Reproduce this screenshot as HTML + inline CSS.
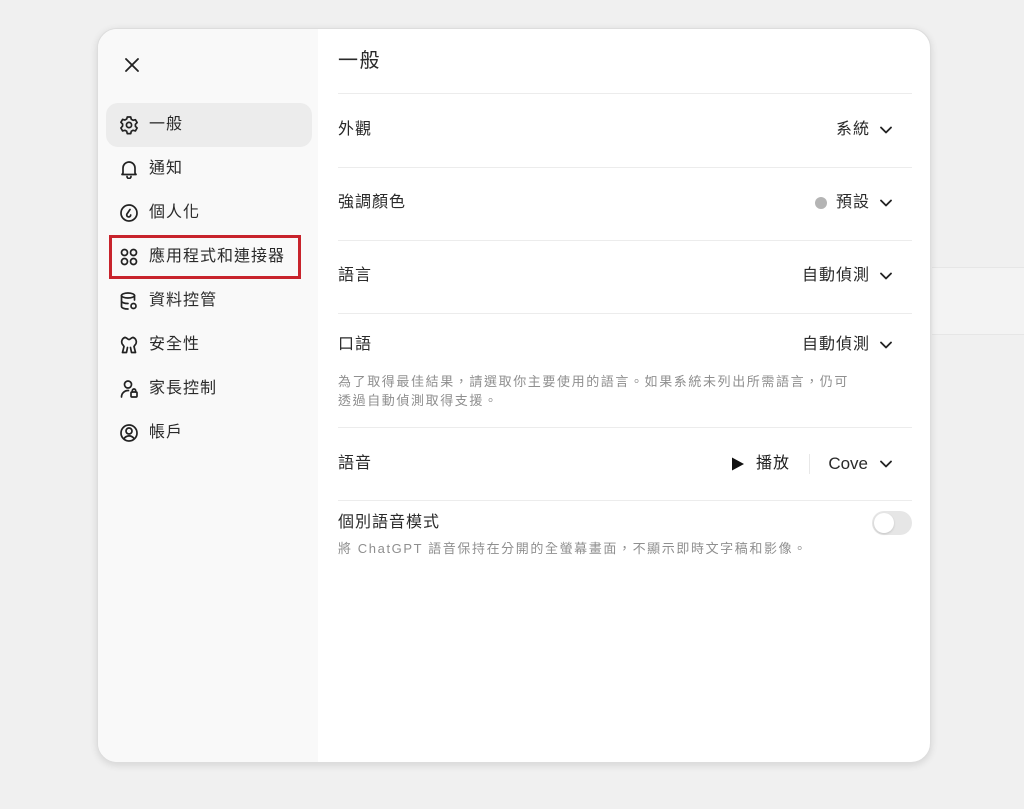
<!DOCTYPE html>
<html><head><meta charset="utf-8">
<style>
*{margin:0;padding:0;box-sizing:border-box}
body{width:1024px;height:809px;background:#f0f0f0;font-family:"Liberation Sans","Noto Sans CJK TC",sans-serif;color:#1f1f1f;position:relative;overflow:hidden}
.bgp{position:absolute;left:932px;top:267px;width:100px;height:68px;background:#f3f3f3;border-top:1px solid #e6e6e6;border-bottom:1px solid #e6e6e6}
.modal{position:absolute;left:97px;top:28px;width:834px;height:735px;background:#fff;border-radius:20px;overflow:hidden;box-shadow:0 2px 8px rgba(0,0,0,.12);border:1px solid #ddd}
.side{position:absolute;left:0;top:0;width:220px;height:100%;background:#f9f9f9}
.abs{position:absolute}
.item{position:absolute;left:8px;width:206px;height:44px;border-radius:12px;display:flex;align-items:center;font-size:16px;color:#2a2a2a;letter-spacing:1px}
.item svg{position:absolute;left:13px;top:12px;width:20px;height:20px;fill:none;stroke:#222;stroke-width:1.7;stroke-linecap:round;stroke-linejoin:round}
.item span{position:absolute;left:43px;top:11px;line-height:22px}
.line{position:absolute;left:240px;width:574px;height:1px;background:#ececec}
.lab{position:absolute;left:240px;font-size:16px;line-height:22px;color:#2a2a2a;letter-spacing:1px}
.val{position:absolute;right:60px;font-size:16px;line-height:22px;color:#2a2a2a;text-align:right;white-space:nowrap;letter-spacing:1px}
.chev{position:absolute;left:781px;width:14px;height:14px;fill:none;stroke:#222;stroke-width:1.8;stroke-linecap:round;stroke-linejoin:round}
.desc{position:absolute;left:240px;font-size:13px;line-height:19px;color:#8f8f8f;letter-spacing:1.6px;white-space:nowrap}
</style></head><body>
<div class="bgp"></div>
<div class="modal">
 <div class="side">
  <svg class="abs" style="left:26px;top:28px" width="16" height="16" viewBox="0 0 16 16" fill="none" stroke="#222" stroke-width="1.8" stroke-linecap="round"><path d="M2 2L14 14M14 2L2 14"/></svg>
  <div class="item" style="top:74px;background:#ececec"><svg viewBox="0 0 20 20"><path d="M8.3 2h3.4l.6 2.3 1.8 1 2.3-.6 1.7 2.9-1.7 1.7v2l1.7 1.7-1.7 2.9-2.3-.6-1.8 1-.6 2.3H8.3l-.6-2.3-1.8-1-2.3.6-1.7-2.9L3.6 11V9L1.9 7.3l1.7-2.9 2.3.6 1.8-1z"/><circle cx="10" cy="10" r="2.6"/></svg><span>一般</span></div>
  <div class="item" style="top:118px"><svg viewBox="0 0 20 20"><path d="M4 14V9a6 6 0 0 1 12 0v5l1 1.5H3z"/><path d="M8 17.5a2 2 0 0 0 4 0"/></svg><span>通知</span></div>
  <div class="item" style="top:162px"><svg viewBox="0 0 20 20"><circle cx="10" cy="10" r="8"/><path d="M11 6.5 8.3 10.5a2 2 0 1 0 3.4 1.5"/></svg><span>個人化</span></div>
  <div class="item" style="top:206px"><svg viewBox="0 0 20 20"><circle cx="5.5" cy="5.5" r="3"/><circle cx="14.5" cy="5.5" r="3"/><circle cx="5.5" cy="14.5" r="3"/><circle cx="14.5" cy="14.5" r="3"/></svg><span>應用程式和連接器</span></div>
  <div class="abs" style="left:11px;top:206px;width:192px;height:44px;border:3px solid #c8232c"></div>
  <div class="item" style="top:250px"><svg viewBox="0 0 20 20"><ellipse cx="9" cy="4.5" rx="6.5" ry="2.5"/><path d="M2.5 4.5v11c0 1.4 2.9 2.5 6.5 2.5M15.5 4.5V9M2.5 10c0 1.4 2.9 2.5 6.5 2.5"/><circle cx="14.5" cy="15" r="2.5"/></svg><span>資料控管</span></div>
  <div class="item" style="top:294px"><svg viewBox="0 0 20 20"><path d="M6 2.5a4.5 4.5 0 0 0-2 7.5l1 1.5-1.5 6h4l1-5M14 2.5a4.5 4.5 0 0 1 2 7.5l-1 1.5 1.5 6h-4l-1-5"/><path d="M6 2.5c2 0 2.5 2 4 2s2-2 4-2"/></svg><span>安全性</span></div>
  <div class="item" style="top:338px"><svg viewBox="0 0 20 20"><circle cx="9" cy="5.5" r="3.5"/><path d="M2.5 18a6.5 6.5 0 0 1 7-6.5"/><rect x="12" y="13" width="6" height="5" rx="1"/><path d="M13.3 13v-1.3a1.7 1.7 0 0 1 3.4 0V13"/></svg><span>家長控制</span></div>
  <div class="item" style="top:382px"><svg viewBox="0 0 20 20"><circle cx="10" cy="10" r="8"/><circle cx="10" cy="8" r="3"/><path d="M5 15.5c1.5-2 3-2.6 5-2.6s3.5.6 5 2.6"/></svg><span>帳戶</span></div>
 </div>
 <div class="abs" style="left:240px;top:18px;font-size:20px;line-height:28px;color:#2a2a2a;letter-spacing:1.5px">一般</div>
 <div class="line" style="top:64px"></div>
 <div class="lab" style="top:90px">外觀</div><div class="val" style="top:90px">系統</div>
 <svg class="chev" style="top:94px" viewBox="0 0 14 14"><path d="M2 4.5l5 5 5-5"/></svg>
 <div class="line" style="top:138px"></div>
 <div class="lab" style="top:163px">強調顏色</div><div class="val" style="top:163px">預設</div>
 <div class="abs" style="left:717px;top:168px;width:12px;height:12px;border-radius:50%;background:#b4b4b4"></div>
 <svg class="chev" style="top:167px" viewBox="0 0 14 14"><path d="M2 4.5l5 5 5-5"/></svg>
 <div class="line" style="top:211px"></div>
 <div class="lab" style="top:236px">語言</div><div class="val" style="top:236px">自動偵測</div>
 <svg class="chev" style="top:240px" viewBox="0 0 14 14"><path d="M2 4.5l5 5 5-5"/></svg>
 <div class="line" style="top:284px"></div>
 <div class="lab" style="top:305px">口語</div><div class="val" style="top:305px">自動偵測</div>
 <svg class="chev" style="top:309px" viewBox="0 0 14 14"><path d="M2 4.5l5 5 5-5"/></svg>
 <div class="desc" style="top:343px">為了取得最佳結果，請選取你主要使用的語言。如果系統未列出所需語言，仍可<br>透過自動偵測取得支援。</div>
 <div class="line" style="top:398px"></div>
 <div class="lab" style="top:424px">語音</div>
 <svg class="abs" style="left:633px;top:428px" width="13" height="14" viewBox="0 0 13 14"><path d="M1 0.5L13 7 1 13.5z" fill="#111"/></svg>
 <div class="abs" style="left:658px;top:424px;font-size:16px;line-height:22px;letter-spacing:1px">播放</div>
 <div class="abs" style="left:711px;top:425px;width:1px;height:20px;background:#e8e8e8"></div>
 <div class="val" style="top:424px;font-size:17px;letter-spacing:0;right:62px">Cove</div>
 <svg class="chev" style="top:428px" viewBox="0 0 14 14"><path d="M2 4.5l5 5 5-5"/></svg>
 <div class="line" style="top:471px"></div>
 <div class="lab" style="top:483px">個別語音模式</div>
 <div class="desc" style="top:510px">將 ChatGPT 語音保持在分開的全螢幕畫面，不顯示即時文字稿和影像。</div>
 <div class="abs" style="left:774px;top:482px;width:40px;height:24px;border-radius:12px;background:#e6e6e6"><div style="position:absolute;left:2px;top:2px;width:20px;height:20px;border-radius:50%;background:#fff;box-shadow:0 1px 2px rgba(0,0,0,.15)"></div></div>
</div>
</body></html>
